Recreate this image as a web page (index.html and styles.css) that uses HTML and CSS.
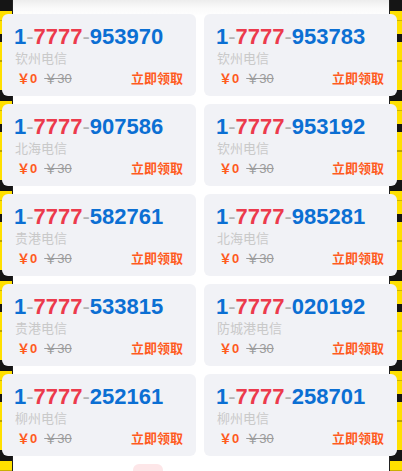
FILE: index.html
```html
<!DOCTYPE html>
<html lang="zh-CN">
<head>
    <meta charset="UTF-8">
    <meta name="viewport" content="width=device-width, initial-scale=1.0">
    <title>靓号领取</title>
    <link rel="stylesheet" href="styles.css">
</head>
<body>

<div class="page">
    <div class="edge edge-left"></div>
    <div class="edge edge-right"></div>

    <div class="number-list">
        <div class="card">
            <div class="number"><span class="pre">1</span><span class="dash">-</span><span class="lucky">7777</span><span class="dash">-</span><span class="tail">953970</span></div>
            <div class="city">钦州电信</div>
            <div class="price-row">
                <span class="price">￥0</span>
                <span class="old-price">￥30</span>
                <span class="grab">立即领取</span>
            </div>
        </div>
        <div class="card">
            <div class="number"><span class="pre">1</span><span class="dash">-</span><span class="lucky">7777</span><span class="dash">-</span><span class="tail">953783</span></div>
            <div class="city">钦州电信</div>
            <div class="price-row">
                <span class="price">￥0</span>
                <span class="old-price">￥30</span>
                <span class="grab">立即领取</span>
            </div>
        </div>
        <div class="card">
            <div class="number"><span class="pre">1</span><span class="dash">-</span><span class="lucky">7777</span><span class="dash">-</span><span class="tail">907586</span></div>
            <div class="city">北海电信</div>
            <div class="price-row">
                <span class="price">￥0</span>
                <span class="old-price">￥30</span>
                <span class="grab">立即领取</span>
            </div>
        </div>
        <div class="card">
            <div class="number"><span class="pre">1</span><span class="dash">-</span><span class="lucky">7777</span><span class="dash">-</span><span class="tail">953192</span></div>
            <div class="city">钦州电信</div>
            <div class="price-row">
                <span class="price">￥0</span>
                <span class="old-price">￥30</span>
                <span class="grab">立即领取</span>
            </div>
        </div>
        <div class="card">
            <div class="number"><span class="pre">1</span><span class="dash">-</span><span class="lucky">7777</span><span class="dash">-</span><span class="tail">582761</span></div>
            <div class="city">贵港电信</div>
            <div class="price-row">
                <span class="price">￥0</span>
                <span class="old-price">￥30</span>
                <span class="grab">立即领取</span>
            </div>
        </div>
        <div class="card">
            <div class="number"><span class="pre">1</span><span class="dash">-</span><span class="lucky">7777</span><span class="dash">-</span><span class="tail">985281</span></div>
            <div class="city">北海电信</div>
            <div class="price-row">
                <span class="price">￥0</span>
                <span class="old-price">￥30</span>
                <span class="grab">立即领取</span>
            </div>
        </div>
        <div class="card">
            <div class="number"><span class="pre">1</span><span class="dash">-</span><span class="lucky">7777</span><span class="dash">-</span><span class="tail">533815</span></div>
            <div class="city">贵港电信</div>
            <div class="price-row">
                <span class="price">￥0</span>
                <span class="old-price">￥30</span>
                <span class="grab">立即领取</span>
            </div>
        </div>
        <div class="card">
            <div class="number"><span class="pre">1</span><span class="dash">-</span><span class="lucky">7777</span><span class="dash">-</span><span class="tail">020192</span></div>
            <div class="city">防城港电信</div>
            <div class="price-row">
                <span class="price">￥0</span>
                <span class="old-price">￥30</span>
                <span class="grab">立即领取</span>
            </div>
        </div>
        <div class="card">
            <div class="number"><span class="pre">1</span><span class="dash">-</span><span class="lucky">7777</span><span class="dash">-</span><span class="tail">252161</span></div>
            <div class="city">柳州电信</div>
            <div class="price-row">
                <span class="price">￥0</span>
                <span class="old-price">￥30</span>
                <span class="grab">立即领取</span>
            </div>
        </div>
        <div class="card">
            <div class="number"><span class="pre">1</span><span class="dash">-</span><span class="lucky">7777</span><span class="dash">-</span><span class="tail">258701</span></div>
            <div class="city">柳州电信</div>
            <div class="price-row">
                <span class="price">￥0</span>
                <span class="old-price">￥30</span>
                <span class="grab">立即领取</span>
            </div>
        </div>
    </div>

    <div class="more">
        <div class="more-btn"></div>
    </div>
</div>

</body>
</html>
```

FILE: styles.css
```css
body {
    margin: 0;
    padding: 0;
    font-family: "Liberation Sans", "Noto Sans CJK SC", sans-serif;
    background-color: white;
    overflow: hidden;
}

.page {
    position: relative;
    height: 471px;
    background: linear-gradient(to bottom, #ededed 0px, #fafafa 8px, white 16px);
}

/* yellow decorative strips on both sides */
.edge {
    position: absolute;
    top: 0;
    bottom: 0;
    width: 12px;
    background-color: #ffe000;
    background-image: repeating-linear-gradient(to bottom,
        #151515 0px, #151515 11px,
        #ffe000 11px, #ffe000 20px,
        #c9b100 20px, #c9b100 21px,
        #ffe000 21px, #ffe000 34px,
        #151515 34px, #151515 42px,
        #ffe000 42px, #ffe000 60px,
        #b9a300 60px, #b9a300 62px,
        #ffe000 62px, #ffe000 90px);
}

.edge-left {
    left: 0;
    border-right: 1px solid #222;
}

.edge-right {
    right: 0;
    width: 12px;
    border-left: 1px solid #222;
}

.number-list {
    position: relative;
    display: grid;
    grid-template-columns: 194px 193px;
    column-gap: 8px;
    row-gap: 8px;
    padding: 14px 5px 0 2px;
}

.card {
    background-color: #f1f2f6;
    border-radius: 6px;
    padding: 10px 13px 8px 12px;
    height: 64px;
}

.number {
    font-size: 22px;
    font-weight: bold;
    line-height: 26px;
    white-space: nowrap;
}

.number .pre,
.number .tail {
    color: #0b6fd3;
}

.number .lucky {
    color: #ec3a4c;
}

.number .dash {
    color: #b3b3b3;
    font-weight: normal;
}

.city {
    font-size: 13px;
    line-height: 18px;
    color: #c9c9c9;
    margin-left: 1px;
}

.price-row {
    display: flex;
    align-items: center;
    font-size: 13px;
    line-height: 18px;
    margin-top: 2px;
}

.price {
    color: #ff5b1e;
    font-weight: bold;
    margin-left: 3px;
}

.old-price {
    color: #9a9a9a;
    text-decoration: line-through;
    margin-left: 7px;
}

.grab {
    margin-left: auto;
    color: #ff5b1e;
    font-weight: bold;
}

.more {
    position: relative;
    display: flex;
    padding: 8px 0 0 133px;
}

.more-btn {
    width: 30px;
    height: 20px;
    border-radius: 6px;
    background-color: #fde6e8;
}
```
